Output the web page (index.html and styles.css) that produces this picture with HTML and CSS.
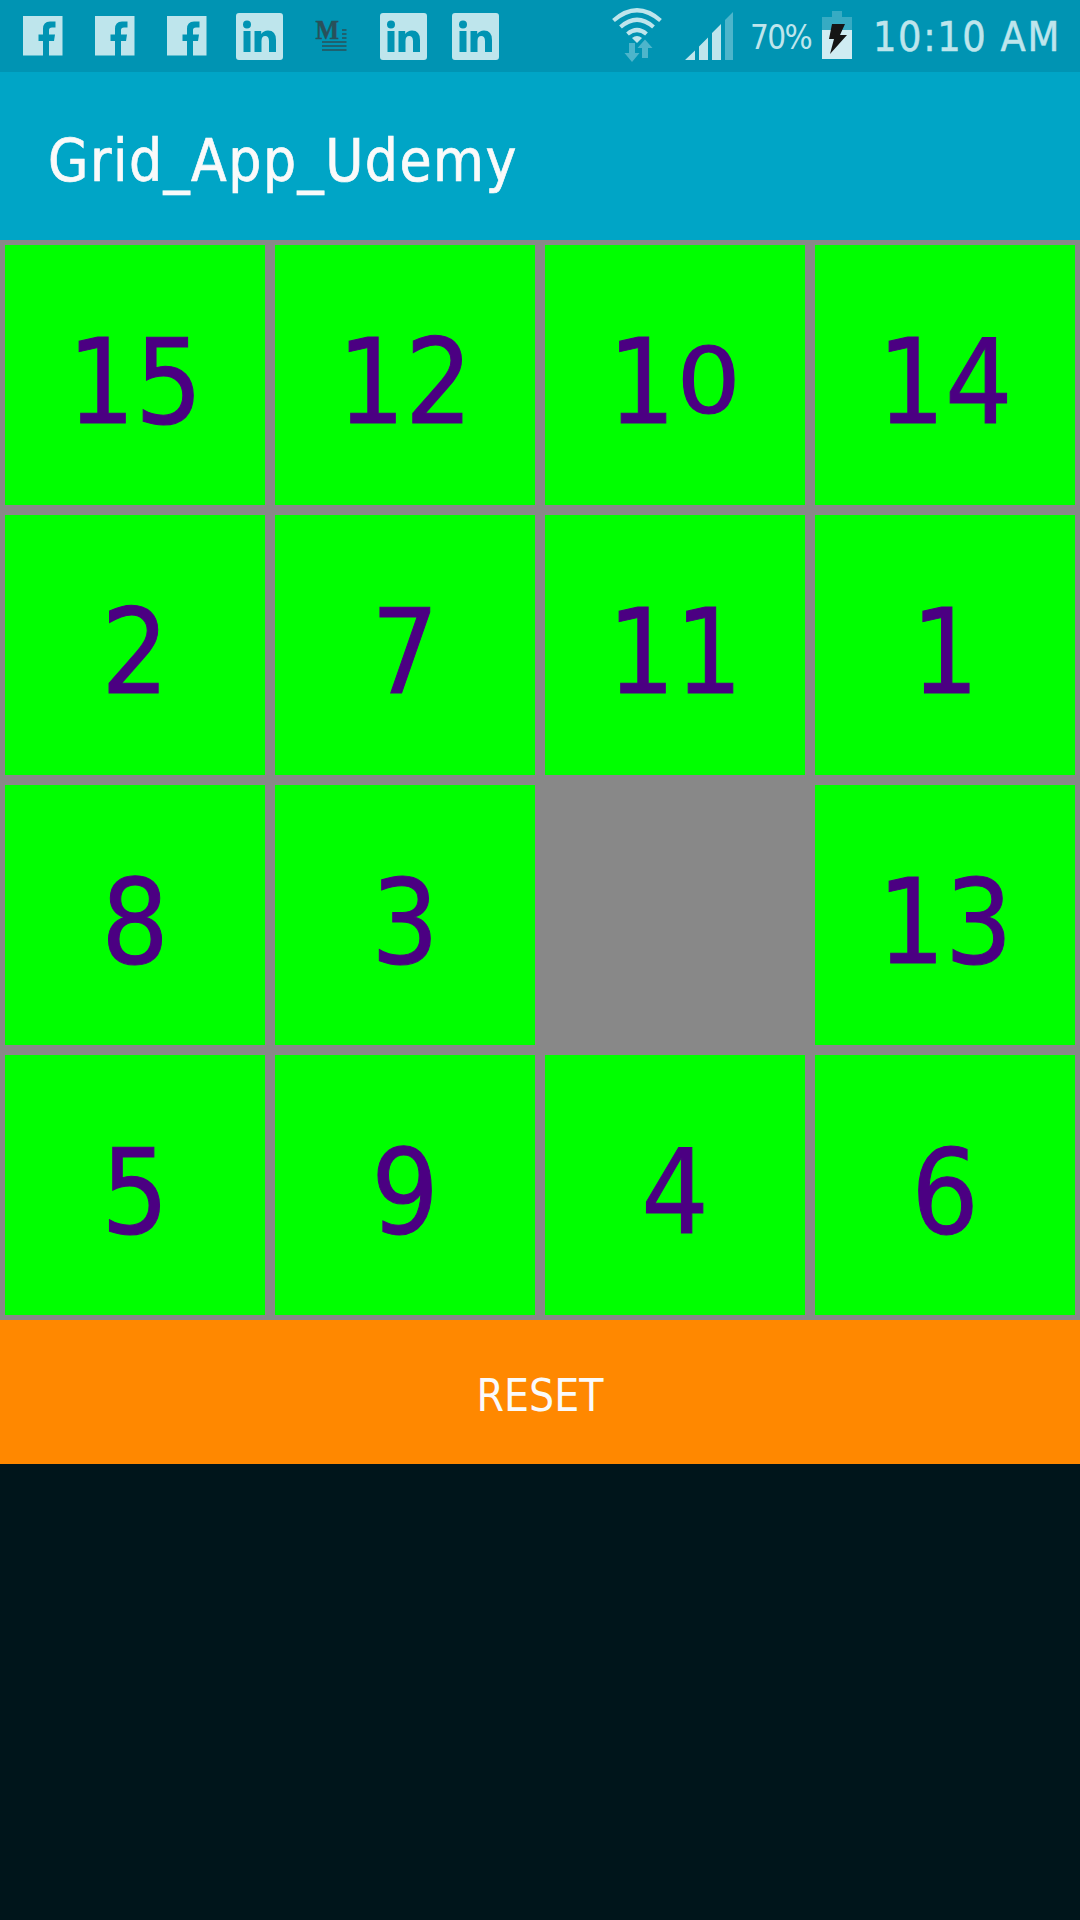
FILE: index.html
```html
<!DOCTYPE html>
<html lang="en">
<head>
<meta charset="utf-8">
<title>Grid_App_Udemy</title>
<link rel="stylesheet" href="styles.css">
</head>
<body>
<svg class="defs" aria-hidden="true">
  <symbol id="facebook" viewBox="0 0 40 40">
    <path d="M0 0h39.5v39.5H26V25h5l1-6.500h-6v-4.500q0-2.500 3-2.500h3.500V5.500H27q-7 0-7 7.500v5.500h-4.500V25H20v14.500H0z"/>
  </symbol>
  <symbol id="linkedin" viewBox="0 0 47 47">
    <path fill-rule="evenodd" d="M3 0h41q3 0 3 3v41q0 3-3 3H3q-3 0-3-3V3q0-3 3-3zM7.500 18v21h7V18zM11 7.500a4 4 0 1 0 0 8a4 4 0 1 0 0-8zM18.500 18v21h7V28q0-5 3.700-5t3.800 5v11h7V27q0-9.500-8-9.500-4.500 0-6.800 3.500v-3z"/>
  </symbol>
</svg>
<header class="status">
  <div class="notifications">
    <span class="slot"><svg class="fb"><use href="#facebook"/></svg></span>
    <span class="slot"><svg class="fb"><use href="#facebook"/></svg></span>
    <span class="slot"><svg class="fb"><use href="#facebook"/></svg></span>
    <span class="slot"><svg class="li"><use href="#linkedin"/></svg></span>
    <span class="slot"><svg class="medium" viewBox="0 0 32 34">
      <text class="medium-m" x="0.500" y="20" textLength="23.500" lengthAdjust="spacingAndGlyphs">M</text>
      <path d="M27 11h4.500M27 15h4.500M27 19h4.500M7 23h24.500M7 27h24.500M7 31h24.500"/>
    </svg></span>
    <span class="slot"><svg class="li"><use href="#linkedin"/></svg></span>
    <span class="slot"><svg class="li"><use href="#linkedin"/></svg></span>
  </div>
  <div class="system">
    <svg class="wifi" viewBox="0 0 50 56">
      <g class="arcs"><path d="M1.500 12.500Q25-8 48.500 12.500M8.500 19Q25 4.500 41.500 19M15.500 26Q25 18 34.500 26"/></g>
      <path class="lit" d="M20 30Q25 26 30 30L25 35z"/>
      <path class="dim" d="M17 35h6v10h4.500L20 54l-7.500-9H17zM30 50V40h-4.500L33 31.500l7.500 8.500H36v10z"/>
    </svg>
    <svg class="signal" viewBox="0 0 48 48">
      <path class="lit" d="M0 48l10-9.500V48zM14 48V34.500l9-9V48zM27 48V21l9-9V48z"/>
      <path class="dim" d="M40 48V8l8-8v48z"/>
    </svg>
    <span class="percent">70%</span>
    <svg class="battery" viewBox="0 0 30 48">
      <path class="cell" d="M10 0h10v6h10v13H0V6h10z"/>
      <path class="charge" d="M0 19h30v29H0z"/>
      <path class="bolt" d="M10 13h13l-5 11h7L8 43l4-15H7z"/>
    </svg>
    <span class="clock">10:10 AM</span>
  </div>
</header>
<div class="appbar"><h1>Grid_App_Udemy</h1></div>
<main class="board">
  <div class="tile">15</div><div class="tile">12</div><div class="tile"><span>1<span class="zero">0</span></span></div><div class="tile">14</div>
  <div class="tile">2</div><div class="tile">7</div><div class="tile">11</div><div class="tile">1</div>
  <div class="tile">8</div><div class="tile">3</div><div class="tile empty"></div><div class="tile">13</div>
  <div class="tile">5</div><div class="tile">9</div><div class="tile">4</div><div class="tile">6</div>
</main>
<button class="reset">RESET</button>
</body>
</html>
```
FILE: styles.css
```css
* { box-sizing: border-box; }
body {
  margin: 0;
  min-height: 1920px;
  background: #00151b;
  font-family: "DejaVu Sans Condensed", "DejaVu Sans", sans-serif;
  font-stretch: condensed;
}
svg { display: block; flex: none; }
.defs { position: absolute; width: 0; height: 0; }
.status {
  display: flex;
  justify-content: space-between;
  height: 72px;
  padding: 0 21px 0 7px;
  background: #0094b3;
  color: #bee5ec;
  fill: #bee5ec;
}
.notifications { display: flex; }
.slot { display: flex; width: 72px; align-items: center; justify-content: center; }
.fb { width: 40px; height: 40px; }
.li { width: 47px; height: 47px; }
.medium { width: 32px; height: 34px; overflow: visible; fill: #29505a; stroke: #29505a; stroke-width: 1.3; }
.medium-m { font: bold 28px "Liberation Serif", serif; stroke-width: .5; }
.system { display: flex; align-items: flex-start; white-space: nowrap; }
.wifi { width: 50px; height: 56px; margin: 8px 23px 0 0; }
.arcs { fill: none; stroke: #bee5ec; stroke-width: 4.2; }
.dim { fill: #4db5cb; }
.signal { width: 48px; height: 48px; margin: 12px 17px 0 0; }
.percent { width: 72px; margin-top: 18px; font-size: 33px; line-height: 40px; letter-spacing: -1.6px; }
.battery { width: 30px; height: 48px; margin: 11px 21px 0 0; }
.cell { fill: #37abc3; }
.charge { fill: #cfecf2; }
.bolt { fill: #151515; }
.clock { width: 186px; margin-top: 12px; font-size: 41px; line-height: 50px; letter-spacing: 1.6px; -webkit-text-stroke: .5px; }
.appbar { display: flex; height: 168px; align-items: center; padding: 10px 48px 0; background: #00a5c6; }
h1 { margin: 0; color: #fafafa; font-size: 58px; font-weight: 400; line-height: 1; letter-spacing: 1.5px; -webkit-text-stroke: .7px; }
.board {
  display: grid;
  grid-template-columns: repeat(4, 260px);
  grid-auto-rows: 260px;
  gap: 10px;
  padding: 5px;
  background: #888;
}
.tile {
  display: flex;
  align-items: center;
  justify-content: center;
  padding-top: 14px;
  background: #0f0;
  color: #4b0082;
  font-size: 118px;
  line-height: 1;
  -webkit-text-stroke: 1px;
}
.zero { display: inline-block; font-size: 90px; transform: translateY(-10px) scaleX(1.24); margin: 0 8px 0 7px; }
.empty { background: #888; }
.reset {
  display: block;
  width: 100%;
  height: 144px;
  padding: 6px 0 0;
  border: 0;
  background: #f80;
  color: #fafafa;
  font: inherit;
  font-size: 44px;
}
```
